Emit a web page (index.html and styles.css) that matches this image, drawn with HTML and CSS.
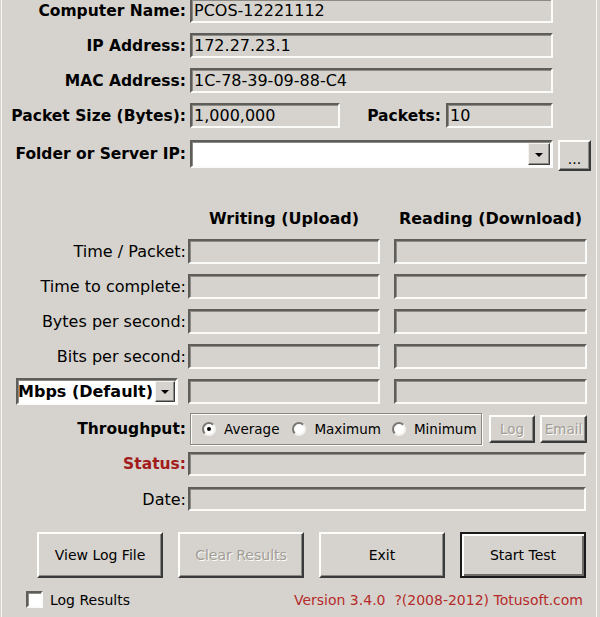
FILE: index.html
```html
<!DOCTYPE html>
<html>
<head>
<meta charset="utf-8">
<link rel="stylesheet" href="styles.css">
</head>
<body>
<div class="frame">
  <div class="row r1">
    <span class="lbl">Computer Name:</span>
    <div class="field wide">PCOS-12221112</div>
  </div>
  <div class="row r-next">
    <span class="lbl">IP Address:</span>
    <div class="field wide">172.27.23.1</div>
  </div>
  <div class="row r-next">
    <span class="lbl">MAC Address:</span>
    <div class="field wide">1C-78-39-09-88-C4</div>
  </div>
  <div class="row r-next">
    <span class="lbl">Packet Size (Bytes):</span>
    <div class="field size">1,000,000</div>
    <span class="lbl lbl-packets">Packets:</span>
    <div class="field packets">10</div>
  </div>
  <div class="row r-folder">
    <span class="lbl lbl-folder">Folder or Server IP:</span>
    <div class="combo folder">
      <div class="combo-text"></div>
      <div class="drop"><span class="arrow"></span></div>
    </div>
    <div class="btn browse">...</div>
  </div>

  <div class="row r-head">
    <span class="head h1">Writing (Upload)</span>
    <span class="head h2">Reading (Download)</span>
  </div>
  <div class="row r-data first">
    <span class="dlbl">Time / Packet:</span>
    <div class="field c1"></div>
    <div class="field c2"></div>
  </div>
  <div class="row r-data">
    <span class="dlbl">Time to complete:</span>
    <div class="field c1"></div>
    <div class="field c2"></div>
  </div>
  <div class="row r-data">
    <span class="dlbl">Bytes per second:</span>
    <div class="field c1"></div>
    <div class="field c2"></div>
  </div>
  <div class="row r-data">
    <span class="dlbl">Bits per second:</span>
    <div class="field c1"></div>
    <div class="field c2"></div>
  </div>
  <div class="row r-data r-mbps">
    <div class="dcell">
      <div class="combo mbps">
        <div class="combo-text">Mbps (Default)</div>
        <div class="drop"><span class="arrow"></span></div>
      </div>
    </div>
    <div class="field c1"></div>
    <div class="field c2"></div>
  </div>

  <div class="row r-through">
    <span class="lbl">Throughput:</span>
    <div class="group">
      <span class="radio on"></span><span class="rtext">Average</span>
      <span class="radio gap1"></span><span class="rtext">Maximum</span>
      <span class="radio gap2"></span><span class="rtext">Minimum</span>
    </div>
    <div class="btn small disabled log">Log</div>
    <div class="btn small disabled email">Email</div>
  </div>
  <div class="row r-status">
    <span class="dlbl status">Status:</span>
    <div class="field full"></div>
  </div>
  <div class="row r-date">
    <span class="dlbl">Date:</span>
    <div class="field full"></div>
  </div>

  <div class="row r-buttons">
    <div class="btn big">View Log File</div>
    <div class="btn big disabled">Clear Results</div>
    <div class="btn big">Exit</div>
    <div class="btn big default">Start Test</div>
  </div>

  <div class="row r-bottom">
    <span class="check"></span>
    <span class="check-text">Log Results</span>
    <span class="version">Version 3.4.0&nbsp; ?(2008-2012) Totusoft.com</span>
  </div>
</div>
</body>
</html>
```

FILE: styles.css
```css
html, body {
  margin: 0;
  padding: 0;
  background: #d6d3ce;
}
body {
  width: 600px;
  height: 617px;
  overflow: hidden;
  font-family: "DejaVu Sans", Verdana, sans-serif;
  color: #000;
}
.frame {
  margin-left: 1px;
  width: 594px;
  height: 617px;
  border-left: 1px solid #f7f6f3;
  border-right: 1px solid #f7f6f3;
  display: flex;
  flex-direction: column;
}
.row {
  display: flex;
  align-items: center;
  flex: 0 0 auto;
}
.r1 { margin-top: -2px; }
.r-next { margin-top: 10px; }
.r-folder { margin-top: 12px; align-items: flex-start; }
.r-head { margin-top: 38px; padding-left: 186px; height: 20px; }
.r-data { margin-top: 10px; }
.r-data.first { margin-top: 10px; }
.r-mbps { margin-top: 9px; }
.r-through { margin-top: 8px; }
.r-status { margin-top: 7px; }
.r-date { margin-top: 11px; }
.r-buttons { margin-top: 21px; padding-left: 35px; gap: 15px; }
.r-bottom { margin-top: 13px; }

.lbl {
  width: 184px;
  margin-right: 4px;
  text-align: right;
  font-weight: bold;
  font-size: 15.5px;
  white-space: nowrap;
  flex: 0 0 auto;
}
.lbl-folder {
  line-height: 28px;
}
.lbl-packets {
  width: 101px;
  margin-right: 5px;
}
.dlbl {
  width: 184px;
  margin-right: 2px;
  text-align: right;
  font-size: 16px;
  white-space: nowrap;
  flex: 0 0 auto;
}
.dlbl.status {
  color: #a31c1c;
  font-weight: bold;
  font-size: 15.5px;
}
.dcell {
  width: 184px;
  margin-right: 2px;
  padding-left: 14px;
  box-sizing: border-box;
  flex: 0 0 auto;
}

.field {
  box-sizing: border-box;
  height: 25px;
  border: 2px solid;
  border-color: #5e5d5a #fbfbf9 #fbfbf9 #5e5d5a;
  box-shadow: inset 1px 1px 0 #8d8b86;
  background: #d6d3ce;
  font-size: 16px;
  line-height: 21px;
  padding-left: 2px;
  white-space: nowrap;
  overflow: hidden;
  flex: 0 0 auto;
}
.field.wide { width: 363px; }
.field.size { width: 150px; }
.field.packets { width: 107px; }
.field.c1 { width: 192px; }
.field.c2 { width: 193px; margin-left: 14px; }
.field.full { width: 398px; height: 24px; }

.combo {
  box-sizing: border-box;
  border: 2px solid;
  border-color: #5e5d5a #fbfbf9 #fbfbf9 #5e5d5a;
  box-shadow: inset 1px 1px 0 #8d8b86;
  background: #fff;
  display: flex;
  align-items: stretch;
  flex: 0 0 auto;
}
.combo.folder {
  width: 363px;
  height: 28px;
}
.combo.mbps {
  width: 162px;
  height: 27px;
}
.combo-text {
  flex: 1 1 auto;
  font-weight: bold;
  font-size: 16px;
  line-height: 23px;
  white-space: nowrap;
}
.drop {
  width: 22px;
  box-sizing: border-box;
  margin: 1px;
  background: #d6d3ce;
  border: 1px solid;
  border-color: #f4f3f0 #3c3c3c #3c3c3c #f4f3f0;
  box-shadow: inset -1px -1px 0 #8d8b86;
  display: flex;
  align-items: center;
  justify-content: center;
}
.combo.mbps .drop { width: 20px; }
.arrow {
  width: 0;
  height: 0;
  border-left: 4px solid transparent;
  border-right: 4px solid transparent;
  border-top: 4px solid #000;
  margin-top: 1px;
}

.btn {
  box-sizing: border-box;
  background: #d6d3ce;
  border: 2px solid;
  border-color: #fdfdfc #3a3a3a #3a3a3a #fdfdfc;
  box-shadow: inset -1px -1px 0 #8d8b86;
  display: flex;
  align-items: center;
  justify-content: center;
  font-size: 14px;
  white-space: nowrap;
  flex: 0 0 auto;
}
.btn.browse {
  width: 33px;
  height: 31px;
  margin-left: 5px;
  font-size: 14px;
  padding-top: 6px;
}
.btn.big {
  width: 126px;
  height: 46px;
}
.btn.default {
  border: 2px solid #1a1a1a;
  box-shadow: inset 2px 2px 0 #fdfdfc, inset -2px -2px 0 #6e6c68;
}
.btn.disabled {
  color: #a19d96;
  text-shadow: 1px 1px 0 #fbfbf9;
}
.btn.small {
  height: 28px;
  font-size: 13.5px;
}
.btn.log { width: 46px; margin-left: 7px; }
.btn.email { width: 47px; margin-left: 5px; }

.head {
  font-weight: bold;
  font-size: 16px;
  line-height: 20px;
  text-align: center;
  white-space: nowrap;
}
.head.h1 { width: 192px; }
.head.h2 { width: 193px; margin-left: 14px; }

.group {
  box-sizing: border-box;
  width: 292px;
  height: 32px;
  border: 1px solid #8a8782;
  box-shadow: inset 1px 1px 0 #fbfbf9, 1px 1px 0 #fbfbf9;
  display: flex;
  align-items: center;
  padding-left: 11px;
  flex: 0 0 auto;
}
.radio {
  box-sizing: border-box;
  width: 14px;
  height: 14px;
  border-radius: 50%;
  background: #fff;
  border: 2px solid;
  border-color: #7a7873 #f3f2ef #f3f2ef #7a7873;
  position: relative;
  flex: 0 0 auto;
}
.radio.on::after {
  content: "";
  position: absolute;
  left: 3px;
  top: 3px;
  width: 4px;
  height: 4px;
  border-radius: 50%;
  background: #000;
}
.radio.gap1 { margin-left: 13px; }
.radio.gap2 { margin-left: 11px; }
.rtext {
  font-size: 13.5px;
  margin-left: 8px;
  white-space: nowrap;
}

.check {
  box-sizing: border-box;
  width: 17px;
  height: 17px;
  margin-left: 24px;
  background: #fff;
  border: 2px solid;
  border-color: #5e5d5a #fbfbf9 #fbfbf9 #5e5d5a;
  box-shadow: inset 1px 1px 0 #8d8b86;
  flex: 0 0 auto;
}
.check-text {
  font-size: 14px;
  margin-left: 7px;
  white-space: nowrap;
}
.version {
  margin-left: auto;
  margin-right: 13px;
  font-size: 14px;
  color: #b52a2a;
  white-space: nowrap;
}
```
